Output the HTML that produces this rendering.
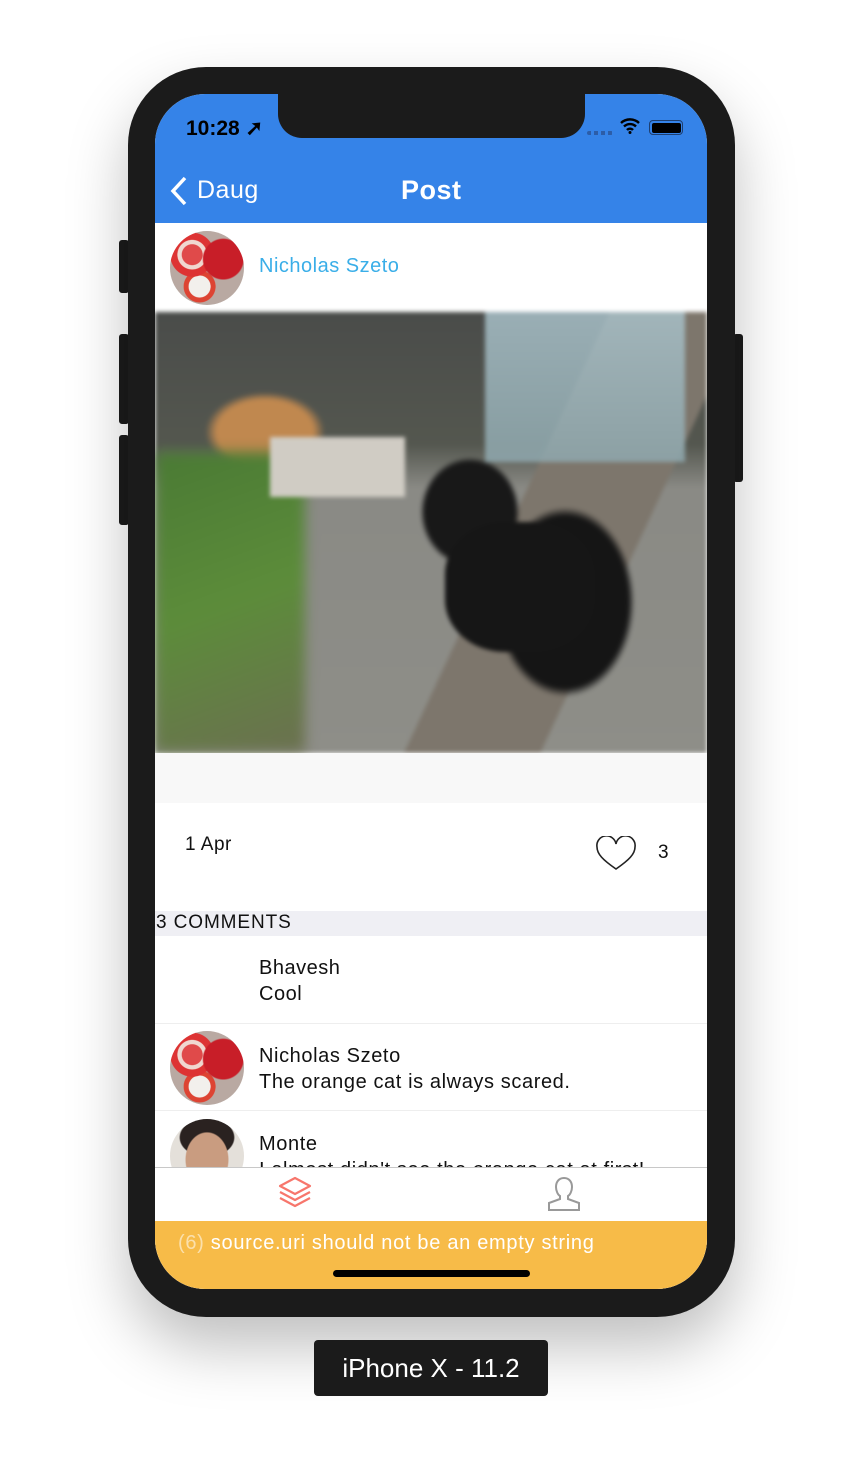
<!DOCTYPE html>
<html><head><meta charset="utf-8"><style>
*{margin:0;padding:0;box-sizing:border-box}
body{width:862px;height:1480px;background:#fff;position:relative;font-family:"Liberation Sans",sans-serif;overflow:hidden}
.phone{position:absolute;left:128px;top:67px;width:607px;height:1250px;background:#1b1b1b;border-radius:78px;box-shadow:0 30px 60px rgba(0,0,0,.25)}
.btn{position:absolute;background:#1b1b1b;width:10px;border-radius:3px}
.screen{position:absolute;left:155px;top:94px;width:552px;height:1195px;border-radius:50px;overflow:hidden;background:#fff}
.abs{position:absolute}
.notch{position:absolute;left:123px;top:0;width:307px;height:44px;background:#1b1b1b;border-radius:0 0 24px 24px}
.t{position:absolute;white-space:nowrap;letter-spacing:.5px}
</style></head><body>
<div class="btn" style="left:119px;top:240px;height:53px"></div>
<div class="btn" style="left:119px;top:334px;height:90px"></div>
<div class="btn" style="left:119px;top:435px;height:90px"></div>
<div class="btn" style="left:733px;top:334px;height:148px"></div>
<div class="phone"></div>
<div class="screen">
 <div class="abs" style="left:0;top:0;width:552px;height:129px;background:#3583e8"></div>
 <div class="notch"></div>
 <div class="t" style="left:31px;top:22px;font-size:21px;font-weight:bold;color:#000;letter-spacing:0">10:28 ➚</div>
 <div class="abs" style="left:432px;top:37px;width:26px;height:4px;background:repeating-linear-gradient(90deg,#2c5da8 0 4px,transparent 4px 7px);border-radius:2px"></div>
 <svg class="abs" style="left:465px;top:24px" width="20" height="16" viewBox="0 0 20 16"><path d="M1 5a13 13 0 0 1 18 0M4 8.5a8.5 8.5 0 0 1 12 0M7 12a4 4 0 0 1 6 0" stroke="#000" stroke-width="2.4" fill="none"/><circle cx="10" cy="14.5" r="1.5"/></svg>
 <div class="abs" style="left:494px;top:26px;width:34px;height:15px;border:1.5px solid #1e3f70;border-radius:4px;padding:1.5px"><div style="background:#000;width:100%;height:100%;border-radius:2px"></div></div>
 <svg class="abs" style="left:14px;top:82px" width="20" height="30"><path d="M16 2L4 15l12 13" stroke="#fff" stroke-width="3.5" fill="none"/></svg>
 <div class="t" style="left:42px;top:82px;font-size:25px;color:#fff">Daug</div>
 <div class="t" style="left:246px;top:81px;font-size:27px;font-weight:bold;color:#fff">Post</div>
 <div class="abs" style="left:15px;top:137px;width:74px;height:74px;border-radius:50%;background:radial-gradient(circle at 72% 38%,#c81e28 0 28%,transparent 30%),radial-gradient(circle at 30% 32%,#e04a4a 0 14%,#f0d8d0 15% 20%,#d33 21% 30%,transparent 31%),radial-gradient(circle at 40% 75%,#f2f0ec 0 15%,#d43 16% 22%,transparent 23%),#b9a9a2"></div>
 <div class="t" style="left:104px;top:161px;font-size:20px;color:#3aaee8">Nicholas Szeto</div>
 <div class="abs" style="left:0;top:218px;width:552px;height:441px;background:
  radial-gradient(ellipse 70px 95px at 410px 290px,#151515 0 90%,transparent 100%),
  radial-gradient(ellipse 50px 55px at 315px 200px,#181818 0 90%,transparent 100%),
  radial-gradient(ellipse 60px 40px at 110px 120px,#c0884f 0 80%,transparent 100%),
  linear-gradient(115deg,transparent 0 60%,#7d766c 60% 78%,transparent 78%),
  linear-gradient(180deg,#4a4c4a 0,#54574f 30%,#8a8a85 40%,#8e8e88 100%),#888;filter:blur(2px)">
  <div class="abs" style="left:0;top:140px;width:150px;height:300px;background:linear-gradient(160deg,#4a7a34,#5c8c3a 50%,#6b7050);filter:blur(6px)"></div>
  <div class="abs" style="left:115px;top:125px;width:135px;height:60px;background:#d0ccc4"></div>
  <div class="abs" style="left:330px;top:0;width:200px;height:150px;background:linear-gradient(180deg,#a8c0c8,#8fa8ae);opacity:.85"></div>
  <div class="abs" style="left:290px;top:210px;width:150px;height:130px;border-radius:40%;background:#161616"></div>
 </div>
 <div class="abs" style="left:0;top:659px;width:552px;height:50px;background:#f8f8f8"></div>
 <div class="t" style="left:30px;top:740px;font-size:19px;color:#111">1 Apr</div>
 <svg class="abs" style="left:440px;top:742px" width="42" height="36" viewBox="0 0 42 36"><path d="M21 33C8 24 2 18 2 11a9 9 0 0 1 19-3a9 9 0 0 1 19 3c0 7-6 13-19 22z" fill="none" stroke="#222" stroke-width="1.6"/></svg>
 <div class="t" style="left:503px;top:748px;font-size:19px;color:#111">3</div>
 <div class="abs" style="left:0;top:817px;width:552px;height:25px;background:#efeff4"></div>
 <div class="t" style="left:1px;top:818px;font-size:19px;color:#111;letter-spacing:.9px">3 COMMENTS</div>
 <div class="t" style="left:104px;top:861px;font-size:20px;line-height:26px;color:#111">Bhavesh<br>Cool</div>
 <div class="abs" style="left:0;top:929px;width:552px;height:1px;background:#eee"></div>
 <div class="abs" style="left:15px;top:937px;width:74px;height:74px;border-radius:50%;background:radial-gradient(circle at 72% 38%,#c81e28 0 28%,transparent 30%),radial-gradient(circle at 30% 32%,#e04a4a 0 14%,#f0d8d0 15% 20%,#d33 21% 30%,transparent 31%),radial-gradient(circle at 40% 75%,#f2f0ec 0 15%,#d43 16% 22%,transparent 23%),#b9a9a2"></div>
 <div class="t" style="left:104px;top:949px;font-size:20px;line-height:26px;color:#111;letter-spacing:.6px">Nicholas Szeto<br>The orange cat is always scared.</div>
 <div class="abs" style="left:0;top:1016px;width:552px;height:1px;background:#eee"></div>
 <div class="abs" style="left:15px;top:1025px;width:74px;height:74px;border-radius:50%;background:radial-gradient(ellipse 22px 28px at 50% 55%,#c99c80 0 95%,transparent 100%),radial-gradient(ellipse 28px 20px at 50% 25%,#2a2220 0 95%,transparent 100%),#e4e0da"></div>
 <div class="t" style="left:104px;top:1037px;font-size:20px;line-height:26px;color:#111;letter-spacing:.6px">Monte<br>I almost didn't see the orange cat at first!</div>
 <div class="abs" style="left:0;top:1073px;width:552px;height:122px;background:#fff;border-top:1px solid #c8c8c8"></div>
 <svg class="abs" style="left:122px;top:1082px" width="36" height="34" viewBox="0 0 36 34"><path d="M18 2L33 10L18 18L3 10z M3 16L18 24L33 16 M3 22L18 30L33 22" fill="none" stroke="#f7766c" stroke-width="2.2" stroke-linejoin="round"/></svg>
 <svg class="abs" style="left:391px;top:1081px" width="36" height="38" viewBox="0 0 36 38"><path d="M18 3c-6 0-8 5-8 9s2 8 4 9v3L3 28v7h30v-7l-11-4v-3c2-1 4-5 4-9s-2-9-8-9z" fill="none" stroke="#999" stroke-width="2"/></svg>
 <div class="abs" style="left:0;top:1127px;width:552px;height:68px;background:#f7bb48"></div>
 <div class="t" style="left:23px;top:1138px;font-size:20px;color:#fff;letter-spacing:.7px"><span style="opacity:.55">(6)</span> source.uri should not be an empty string</div>
 <div class="abs" style="left:178px;top:1176px;width:197px;height:7px;border-radius:4px;background:#000"></div>
</div>
<div class="abs" style="left:314px;top:1340px;width:234px;height:56px;background:#1b1b1b;border-radius:4px"></div>
<div class="t" style="left:314px;top:1353px;width:234px;text-align:center;font-size:26px;color:#fff;letter-spacing:0">iPhone X - 11.2</div>
</body></html>
